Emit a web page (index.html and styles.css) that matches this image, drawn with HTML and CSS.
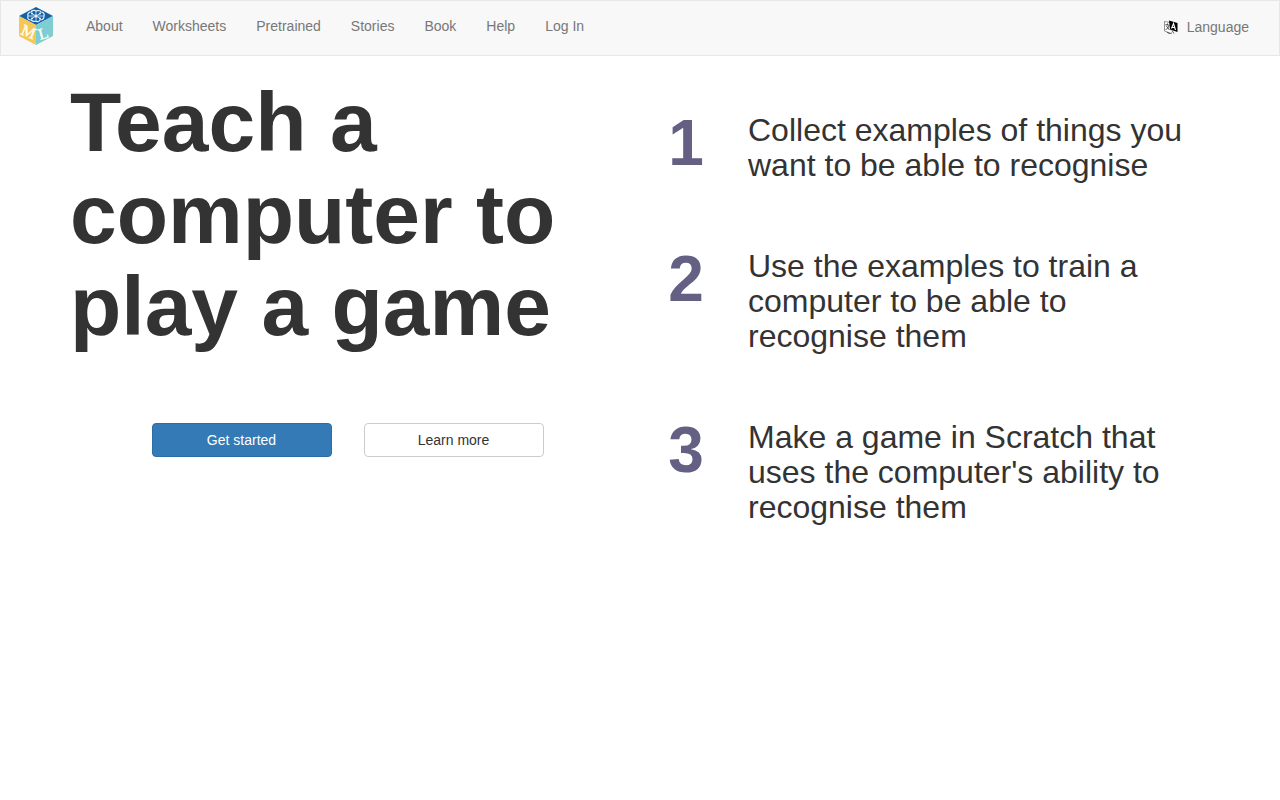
FILE: index.html
```
<!DOCTYPE html>
<html lang="en">
<head>
    <meta charset="UTF-8">
    <meta name="viewport" content="width=device-width, initial-scale=1.0">
    <title>Machine Learning for Kids</title>

    <link rel="stylesheet" href="styles.css">
</head>
<body>

<!-- Top menu -->
<nav class="navbar">
    <a class="brand" href="#" aria-label="Home">
        <svg class="logo" viewBox="0 0 36 38" width="36" height="38">
            <polygon points="18,0 35,9 18,18 1,9" fill="#1561a5"/>
            <polygon points="1,9 18,18 18,38 1,29" fill="#f5c757"/>
            <polygon points="35,9 18,18 18,38 35,29" fill="#7dcdd2"/>
            <g fill="none" stroke="#e4f0f8">
                <path d="M10 9c-1-2 1-4 3-4 1-2 4-2 5-1 2-1 5 0 5 1 2 0 4 2 3 4 0 3-2 4-4 4-1 2-3 2-4 1-2 1-4 0-5-1-2 0-4-1-3-4z" stroke-width="1.200"/>
                <path d="M18 4v9M10 9h16M13 6l10 6M23 6l-10 6" stroke-width=".8"/>
            </g>
            <g fill="#e4f0f8">
                <circle cx="18" cy="9" r="1.500"/>
                <circle cx="14" cy="6.500" r="1"/>
                <circle cx="22" cy="6.500" r="1"/>
                <circle cx="14" cy="11.500" r="1"/>
                <circle cx="22" cy="11.500" r="1"/>
            </g>
            <text class="logo-letter" x="2" y="27" rotate="22">M</text>
            <text class="logo-letter" x="22" y="33" rotate="-16">L</text>
        </svg>
    </a>
    <ul class="menu">
        <li><a href="#">About</a></li>
        <li><a href="#">Worksheets</a></li>
        <li><a href="#">Pretrained</a></li>
        <li><a href="#">Stories</a></li>
        <li><a href="#">Book</a></li>
        <li><a href="#">Help</a></li>
        <li><a href="#">Log In</a></li>
    </ul>
    <a class="language" href="#">
        <svg viewBox="0 0 14 14" width="14" height="14" aria-hidden="true">
            <path d="M6 2.500L.5 1.500v9.500L6 13" fill="#fff" stroke="#777" stroke-width=".8"/>
            <path d="M1.500 4.500l4 .8M3.500 3.500v1.500M5 5.500C4.500 7.500 3.500 9 1.500 9.500M2 5.500l3.500 4.500" fill="none" stroke="#333" stroke-width=".8"/>
            <path d="M5 .5l8.500 2.500v9L6 9.500z" fill="#000"/>
            <path d="M7.500 8.500l2-5 2 6.500M8.500 7.200l2.500.6" fill="none" stroke="#fff" stroke-width="1.100"/>
            <path d="M3 12c1 1.500 3 1.800 5 1M8 10.500l2 3" fill="none" stroke="#333" stroke-width=".8"/>
        </svg>
        Language
    </a>
</nav>

<main class="container">
    <section class="intro">
        <h1>Teach a computer to play a game</h1>
        <div class="buttons">
            <button type="button" class="btn btn-primary">Get started</button>
            <button type="button" class="btn">Learn more</button>
        </div>
    </section>

    <!-- The three steps of a project -->
    <section class="steps">
        <div class="step">
            <div class="step-number">1</div>
            <div class="step-text">Collect examples of things you want to be able to recognise</div>
        </div>
        <div class="step">
            <div class="step-number">2</div>
            <div class="step-text">Use the examples to train a computer to be able to recognise them</div>
        </div>
        <div class="step">
            <div class="step-number">3</div>
            <div class="step-text">Make a game in Scratch that uses the computer's ability to recognise them</div>
        </div>
    </section>
</main>

</body>
</html>
```
FILE: styles.css
```
* {
    box-sizing: border-box;
}

body {
    margin: 0;
    font-family: "Liberation Sans", Arial, sans-serif;
    font-size: 14px;
    line-height: 20px;
    color: #333;
    background-color: #fff;
}

/* Top menu */
.navbar {
    display: flex;
    align-items: center;
    min-height: 56px;
    padding: 0 30px 0 17px;
    background-color: #f8f8f8;
    border: 1px solid #e7e7e7;
}

.navbar a {
    color: #777;
    text-decoration: none;
}

.brand {
    display: flex;
    align-items: center;
    padding-bottom: 4px;
}

.logo-letter {
    font-family: "Liberation Serif", serif;
    font-size: 16px;
    fill: #fffdf0;
    stroke: #fffdf0;
    stroke-width: .4;
}

.menu {
    display: flex;
    margin: 0;
    padding: 0 0 4px 17px;
    list-style: none;
}

.menu a {
    display: block;
    padding: 10px 15px;
}

.language {
    display: flex;
    align-items: center;
    gap: 9px;
    margin-left: auto;
    padding-bottom: 2px;
}

/* Two columns */
.container {
    display: grid;
    grid-template-columns: 1fr 1fr;
    max-width: 1170px;
    margin: 0 auto;
}

.intro {
    padding: 20px 15px;
}

.intro h1 {
    margin: 0;
    font-size: 84px;
    line-height: 92px;
    font-weight: bold;
}

.buttons {
    display: flex;
    justify-content: center;
    gap: 32px;
    margin-top: 71px;
}

.btn {
    width: 180px;
    height: 34px;
    padding: 0 12px;
    font-family: inherit;
    font-size: 14px;
    color: #333;
    background-color: #fff;
    border: 1px solid #ccc;
    border-radius: 4px;
    cursor: pointer;
}

.btn-primary {
    color: #fff;
    background-color: #337ab7;
    border-color: #2e6da4;
}

/* Steps */
.steps {
    display: flex;
    flex-direction: column;
    gap: 61px;
    padding: 52px 30px 30px 0;
}

.step {
    display: grid;
    grid-template-columns: 92px 1fr;
    column-gap: 16px;
}

.step-number {
    font-size: 64px;
    line-height: 70px;
    font-weight: bold;
    text-align: center;
    color: #636084;
}

.step-text {
    padding-top: 5px;
    font-size: 32px;
    line-height: 35px;
}
```
